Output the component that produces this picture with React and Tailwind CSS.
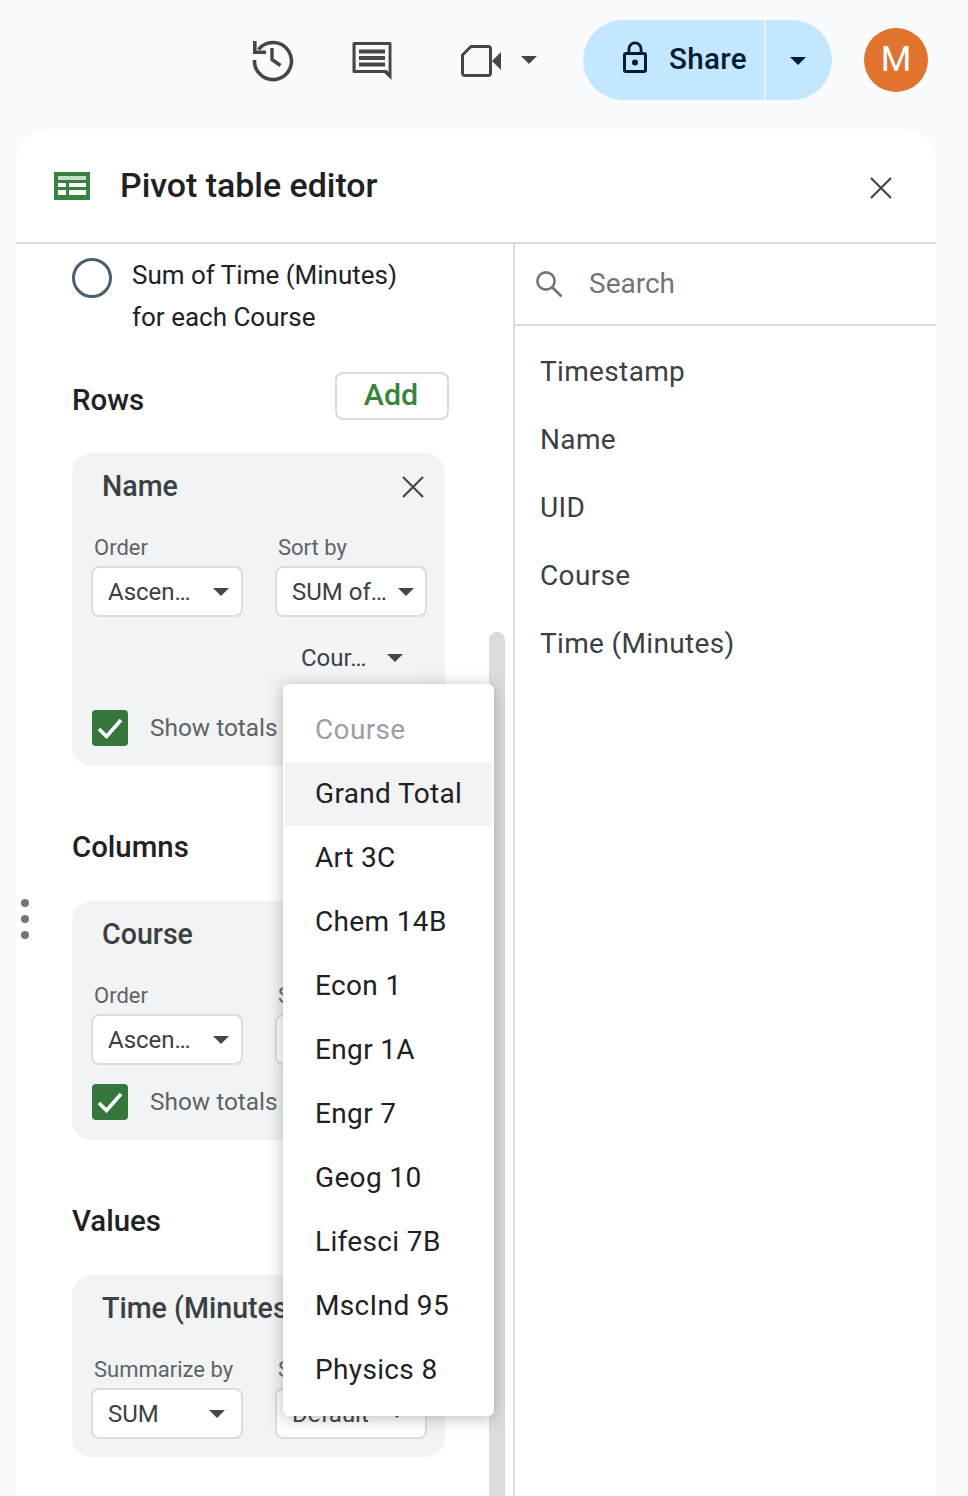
const courses = ["Art 3C", "Chem 14B", "Econ 1", "Engr 1A", "Engr 7", "Geog 10", "Lifesci 7B", "MscInd 95", "Physics 8"];
const fields = ["Timestamp", "Name", "UID", "Course", "Time (Minutes)"];

const Caret = ({ className = "text-[#444746]" }) => (
  <svg width="16" height="8" viewBox="0 0 16 8" className={`shrink-0 ${className}`}>
    <path d="M0 0h16L8 8z" fill="currentColor" />
  </svg>
);

const Close = ({ size = 22, className = "" }) => (
  <svg width={size} height={size} viewBox="0 0 22 22" className={className}>
    <path d="M1 1l20 20M21 1L1 21" stroke="currentColor" strokeWidth="2.2" fill="none" />
  </svg>
);

const Select = ({ text, caretPad = "pr-[12px]" }) => (
  <div className={`w-[152px] h-[51px] bg-white border-2 border-[#dadce0] rounded-[8px] flex items-center justify-between pl-[15px] ${caretPad} text-[24px] text-[#3c4043]`}>
    <span>{text}</span>
    <Caret />
  </div>
);

const Labeled = ({ label, text, caretPad }) => (
  <div className="w-[152px]">
    <div className="h-[30px] leading-[30px] pl-[3px] text-[22px] text-[#5f6368] whitespace-nowrap">{label}</div>
    <div className="mt-[3px]">
      <Select text={text} caretPad={caretPad} />
    </div>
  </div>
);

const ShowTotals = ({ top }) => (
  <div className={`flex items-center pl-[20px] ${top}`}>
    <div className="w-[36px] h-[36px] rounded-[4px] bg-[#34763c] flex items-center justify-center">
      <svg width="26" height="22" viewBox="0 0 26 22">
        <path d="M2 12l7.5 7.5L24 3" stroke="#fff" strokeWidth="3.6" fill="none" />
      </svg>
    </div>
    <span className="ml-[22px] text-[24.4px] leading-[34px] text-[#5f6368]">Show totals</span>
  </div>
);

const Card = ({ title, close, pb = "pb-[20px]", children }) => (
  <div className={`w-[373px] bg-[#f1f3f4] rounded-[20px] pt-[16px] ${pb}`}>
    <div className="flex items-center justify-between pl-[30px] pr-[21px]">
      <span className="text-[28.6px] leading-[34px] font-medium text-[#3c4043] whitespace-nowrap">{title}</span>
      {close && <Close className="text-[#444746] mt-[2px]" />}
    </div>
    {children}
  </div>
);

const Heading = ({ children }) => (
  <div className="mt-[57px] h-[48px] flex items-center text-[29.4px] font-medium text-[#202124]">{children}</div>
);

const TopBar = () => (
  <div className="h-[130px] flex pt-[20px] pl-[583px] relative text-[#444746]">
    <svg width="48" height="48" viewBox="0 0 48 48" className="absolute left-[248px] top-[34px]">
      <path d="M10.5 15.5A18.5 18.5 0 1 1 6.5 26" fill="none" stroke="currentColor" strokeWidth="3.6" />
      <path d="M6.8 7v11.2H18" fill="none" stroke="currentColor" strokeWidth="3.6" />
      <path d="M24 14v11.5l8.5 6" fill="none" stroke="currentColor" strokeWidth="3.4" />
    </svg>
    <svg width="44" height="44" viewBox="0 0 44 44" className="absolute left-[351px] top-[40px]">
      <path d="M3 2h36a1.5 1.5 0 0 1 1.5 1.5V40l-7-7H3a1.5 1.5 0 0 1-1.5-1.5v-28A1.5 1.5 0 0 1 3 2zm1.6 3v25h31l2 2V5z" fill="currentColor" fillRule="evenodd" />
      <path d="M8 9.5h26v4H8zM8 16h26v4H8zM8 22.5h26v4H8z" fill="currentColor" />
    </svg>
    <svg width="42" height="34" viewBox="0 0 42 34" className="absolute left-[461px] top-[44px]">
      <path d="M10 2.5h17a2.5 2.5 0 0 1 2.5 2.5v24a2.5 2.5 0 0 1-2.5 2.5H4A2.5 2.5 0 0 1 1.5 29V11z" fill="none" stroke="currentColor" strokeWidth="3" />
      <path d="M31 17l9-9v18z" fill="currentColor" />
    </svg>
    <Caret className="absolute left-[521px] top-[56px] text-[#444746]" />

    <div className="w-[249px] h-[80px] rounded-full bg-[#c2e7ff] flex text-[#001d35]">
      <div className="w-[183px] flex items-center pl-[34px] border-r-2 border-[#e8f3fb]">
        <svg width="36" height="36" viewBox="0 0 24 24" className="shrink-0 -mt-[4px]">
          <path d="M18 8h-1V6a5 5 0 0 0-10 0v2H6a2 2 0 0 0-2 2v10a2 2 0 0 0 2 2h12a2 2 0 0 0 2-2V10a2 2 0 0 0-2-2zM8.9 6a3.1 3.1 0 0 1 6.2 0v2H8.9zM18 20H6V10h12z" fill="currentColor" />
          <circle cx="12" cy="15" r="2" fill="currentColor" />
        </svg>
        <span className="ml-[16px] -mt-[1px] text-[29.6px] font-medium tracking-[0.3px]">Share</span>
      </div>
      <div className="flex-1 flex items-center pl-[24px] pt-[2px]">
        <Caret className="text-[#001d35]" />
      </div>
    </div>
    <div className="ml-[32px] mt-[8px] w-[64px] h-[64px] rounded-full bg-[#e0742e] flex items-center justify-center text-white text-[35px]">M</div>
  </div>
);

const CourseMenu = () => (
  <div className="absolute left-[267px] top-[440px] w-[211px] bg-white rounded-[6px] py-[14px] px-[2px] shadow-[0_2px_16px_rgba(60,64,67,0.35)] text-[28px] tracking-[0.35px] text-[#202124]">
    <div className="h-[64px] flex items-center pl-[30px] text-[#9aa0a6]">Course</div>
    <div className="h-[64px] flex items-center pl-[30px] bg-[#f1f3f4]">Grand Total</div>
    {courses.map((item, index) => (
      <div key={index} className="h-[64px] flex items-center pl-[30px]">{item}</div>
    ))}
  </div>
);

export default function App() {
  return (
    <div className="w-[968px] h-[1496px] overflow-hidden bg-[#f9fbfd] font-['Roboto',sans-serif]">
      <TopBar />

      <div className="ml-[16px] w-[920px] h-[1366px] bg-white rounded-t-[32px] relative">
        {/* Header */}
        <div className="h-[114px] border-b-2 border-[#dadce0] flex items-center pl-[38px] pr-[44px]">
          <svg width="36" height="28" viewBox="0 0 36 28" className="shrink-0 mt-[-1px]">
            <path d="M0 0h36v28H0z" fill="#3a8240" />
            <path d="M4 4h28v4H4z" fill="#c5dec6" />
            <path d="M4 11h8v4H4zM15 11h17v4H15zM4 18h8v5H4zM15 18h17v5H15z" fill="#fff" />
          </svg>
          <span className="ml-[30px] text-[33.9px] font-medium text-[#202124]">Pivot table editor</span>
          <Close className="ml-auto mt-[3px] text-[#444746]" />
        </div>

        <div className="flex h-[1252px]">
          {/* Left column */}
          <div className="w-[499px] border-r-2 border-[#dadce0] relative overflow-hidden pl-[56px]">
            <div className="flex pt-[14px]">
              <div className="w-[40px] h-[40px] rounded-full border-[3.5px] border-[#4a5f6d] shrink-0"></div>
              <div className="ml-[20px] -mt-[4px] text-[26px] leading-[42px] text-[#202124]">
                <div>Sum of Time (Minutes)</div>
                <div>for each Course</div>
              </div>
            </div>

            <div className="mt-[34px] w-[377px] h-[48px] flex justify-between">
              <span className="pt-[8px] flex items-center text-[29.4px] font-medium text-[#202124]">Rows</span>
              <div className="w-[114px] h-[48px] border-2 border-[#dadce0] rounded-[8px] flex items-center justify-center pb-[2px] pr-[2px] text-[30.4px] font-medium text-[#3a8240]">Add</div>
            </div>

            <div className="mt-[33px]">
              <Card title="Name" close>
                <div className="mt-[30px] pl-[19px] flex gap-[32px]">
                  <Labeled label="Order" text="Ascen…" />
                  <Labeled label="Sort by" text="SUM of…" caretPad="pr-[11px]" />
                </div>
                <div className="mt-[15px] ml-[211px] w-[136px] h-[51px] bg-[#f3f4f5] flex items-center justify-between pl-[18px] pr-[16px] text-[24px] text-[#3c4043]">
                  <span>Cour…</span>
                  <Caret />
                </div>
                <ShowTotals top="mt-[27px]" />
              </Card>
            </div>

            <Heading>Columns</Heading>
            <div className="mt-[30px]">
              <Card title="Course">
                <div className="mt-[30px] pl-[19px] flex gap-[32px]">
                  <Labeled label="Order" text="Ascen…" />
                  <Labeled label="Sort by" text="SUM of…" />
                </div>
                <ShowTotals top="mt-[19px]" />
              </Card>
            </div>

            <Heading>Values</Heading>
            <div className="mt-[30px]">
              <Card title="Time (Minutes)" pb="pb-[18px]">
                <div className="mt-[30px] pl-[19px] flex gap-[32px]">
                  <Labeled label="Summarize by" text="SUM" caretPad="pr-[16px]" />
                  <Labeled label="Show as" text="Default" caretPad="pr-[20px]" />
                </div>
              </Card>
            </div>

            {/* Scrollbar */}
            <div className="absolute left-[473px] top-[388px] bottom-0 w-[16px] rounded-t-full bg-[#dadce0]"></div>
            <CourseMenu />
          </div>

          {/* Field list */}
          <div className="flex-1">
            <div className="h-[82px] border-b-2 border-[#dadce0] flex items-center pl-[20px]">
              <svg width="28" height="28" viewBox="0 0 28 28" className="shrink-0 text-[#757575]">
                <circle cx="11" cy="11" r="8.6" fill="none" stroke="currentColor" strokeWidth="2.6" />
                <path d="M17.5 17.5L26.5 26.5" stroke="currentColor" strokeWidth="2.8" fill="none" />
              </svg>
              <span className="ml-[26px] text-[28px] text-[#70757a]">Search</span>
            </div>
            <div className="pt-[12px] pl-[25px]">
              {fields.map((item, index) => (
                <div key={index} className="h-[68px] flex items-center text-[28px] tracking-[0.35px] text-[#3c4043]">{item}</div>
              ))}
            </div>
          </div>
        </div>

        {/* Resize handle */}
        <div className="absolute left-[5px] top-[769px] flex flex-col gap-[8px]">
          <div className="w-[8px] h-[8px] rounded-full bg-[#757575]"></div>
          <div className="w-[8px] h-[8px] rounded-full bg-[#757575]"></div>
          <div className="w-[8px] h-[8px] rounded-full bg-[#757575]"></div>
        </div>
      </div>
    </div>
  );
}
